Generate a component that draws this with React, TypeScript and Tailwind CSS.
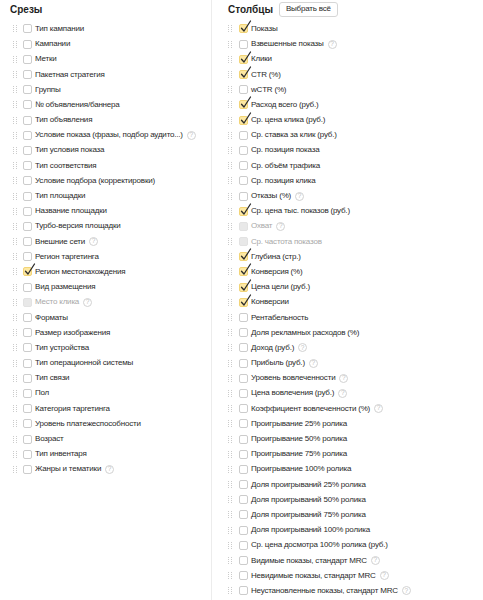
import { Fragment } from 'react';

type Item = { label: string; checked?: boolean; disabled?: boolean; help?: boolean };

const slices: Item[] = [
  { label: 'Тип кампании' },
  { label: 'Кампании' },
  { label: 'Метки' },
  { label: 'Пакетная стратегия' },
  { label: 'Группы' },
  { label: '№ объявления/баннера' },
  { label: 'Тип объявления' },
  { label: 'Условие показа (фразы, подбор аудито...)', help: true },
  { label: 'Тип условия показа' },
  { label: 'Тип соответствия' },
  { label: 'Условие подбора (корректировки)' },
  { label: 'Тип площадки' },
  { label: 'Название площадки' },
  { label: 'Турбо-версия площадки' },
  { label: 'Внешние сети', help: true },
  { label: 'Регион таргетинга' },
  { label: 'Регион местонахождения', checked: true },
  { label: 'Вид размещения' },
  { label: 'Место клика', disabled: true, help: true },
  { label: 'Форматы' },
  { label: 'Размер изображения' },
  { label: 'Тип устройства' },
  { label: 'Тип операционной системы' },
  { label: 'Тип связи' },
  { label: 'Пол' },
  { label: 'Категория таргетинга' },
  { label: 'Уровень платежеспособности' },
  { label: 'Возраст' },
  { label: 'Тип инвентаря' },
  { label: 'Жанры и тематики', help: true },
];

const columns: Item[] = [
  { label: 'Показы', checked: true },
  { label: 'Взвешенные показы', help: true },
  { label: 'Клики', checked: true },
  { label: 'CTR (%)', checked: true },
  { label: 'wCTR (%)' },
  { label: 'Расход всего (руб.)', checked: true },
  { label: 'Ср. цена клика (руб.)', checked: true },
  { label: 'Ср. ставка за клик (руб.)' },
  { label: 'Ср. позиция показа' },
  { label: 'Ср. объём трафика' },
  { label: 'Ср. позиция клика' },
  { label: 'Отказы (%)', help: true },
  { label: 'Ср. цена тыс. показов (руб.)', checked: true },
  { label: 'Охват', disabled: true, help: true },
  { label: 'Ср. частота показов', disabled: true },
  { label: 'Глубина (стр.)', checked: true },
  { label: 'Конверсия (%)', checked: true },
  { label: 'Цена цели (руб.)', checked: true },
  { label: 'Конверсии', checked: true },
  { label: 'Рентабельность' },
  { label: 'Доля рекламных расходов (%)' },
  { label: 'Доход (руб.)', help: true },
  { label: 'Прибыль (руб.)', help: true },
  { label: 'Уровень вовлеченности', help: true },
  { label: 'Цена вовлечения (руб.)', help: true },
  { label: 'Коэффициент вовлеченности (%)', help: true },
  { label: 'Проигрывание 25% ролика' },
  { label: 'Проигрывание 50% ролика' },
  { label: 'Проигрывание 75% ролика' },
  { label: 'Проигрывание 100% ролика' },
  { label: 'Доля проигрываний 25% ролика' },
  { label: 'Доля проигрываний 50% ролика' },
  { label: 'Доля проигрываний 75% ролика' },
  { label: 'Доля проигрываний 100% ролика' },
  { label: 'Ср. цена досмотра 100% ролика (руб.)' },
  { label: 'Видимые показы, стандарт MRC', help: true },
  { label: 'Невидимые показы, стандарт MRC', help: true },
  { label: 'Неустановленные показы, стандарт MRC', help: true },
];

function DragHandle() {
  return (
    <svg width="4" height="7" viewBox="0 0 4 7" className="shrink-0">
      {[0, 2, 4, 6].map((y) => (
        <Fragment key={y}>
          <rect x="0" y={y} width="1" height="1" fill="#cbcbcb" />
          <rect x="3" y={y} width="1" height="1" fill="#cbcbcb" />
        </Fragment>
      ))}
    </svg>
  );
}

function HelpIcon() {
  return (
    <span className="ml-[4px] w-[9px] h-[9px] rounded-full border border-[#d2d2d2] text-[#c0c0c0] text-[6.5px] leading-none flex items-center justify-center shrink-0">
      ?
    </span>
  );
}

function Checkbox({ checked, disabled }: { checked?: boolean; disabled?: boolean }) {
  if (checked) {
    return (
      <span className="relative w-[9px] h-[9px] rounded-[2px] bg-[#fde8a2] border border-[#f2d476] shrink-0">
        <svg width="12" height="13" viewBox="0 0 12 13" className="absolute left-[0px] top-[-5px] overflow-visible">
          <path d="M1.5 8.2 L4 11 L10.5 1" fill="none" stroke="#2b2b2b" strokeWidth="1.3" strokeLinecap="round" strokeLinejoin="round" />
        </svg>
      </span>
    );
  }
  if (disabled) {
    return <span className="w-[9px] h-[9px] rounded-[2px] bg-[#e8e8e8] border border-[#e2e2e2] shrink-0" />;
  }
  return <span className="w-[9px] h-[9px] rounded-[2px] bg-white border border-[#cccccc] shrink-0" />;
}

function Row({ item, gap }: { item: Item; gap: string }) {
  return (
    <div className="flex items-center h-[15.2px]">
      <DragHandle />
      <span className={`${gap} shrink-0`} />
      <Checkbox checked={item.checked} disabled={item.disabled} />
      <span
        className={`ml-[3px] whitespace-nowrap text-[8px] tracking-[-0.2px] ${
          item.disabled ? 'text-[#a8a8a8]' : 'text-[#2a2a2a]'
        }`}
      >
        {item.label}
      </span>
      {item.help && <HelpIcon />}
    </div>
  );
}

export default function App() {
  return (
    <div className="flex h-[600px] w-[483px] overflow-hidden bg-white font-['Liberation_Sans',Arial,sans-serif]">
      {/* Срезы */}
      <div className="w-[212px] shrink-0 border-r border-[#ececec] pl-[13px]">
        <div className="h-[21.4px] flex items-center -ml-[3px]">
          <h2 className="font-bold text-[10px] text-[#1f1f1f] -mt-[3px]">Срезы</h2>
        </div>
        {slices.map((item, i) => (
          <Row key={i} item={item} gap="w-[6px]" />
        ))}
      </div>

      {/* Столбцы */}
      <div className="flex-1 pl-[16px]">
        <div className="h-[21.4px] flex items-center">
          <h2 className="font-bold text-[10px] text-[#1f1f1f] -mt-[3px]">Столбцы</h2>
          <button className="ml-[6px] -mt-[3px] h-[15px] px-[6px] rounded-[3px] border border-[#d6d6d6] bg-white text-[8px] tracking-[-0.2px] text-[#2a2a2a] leading-none">
            Выбрать всё
          </button>
        </div>
        {columns.map((item, i) => (
          <Row key={i} item={item} gap="w-[7px]" />
        ))}
      </div>
    </div>
  );
}
